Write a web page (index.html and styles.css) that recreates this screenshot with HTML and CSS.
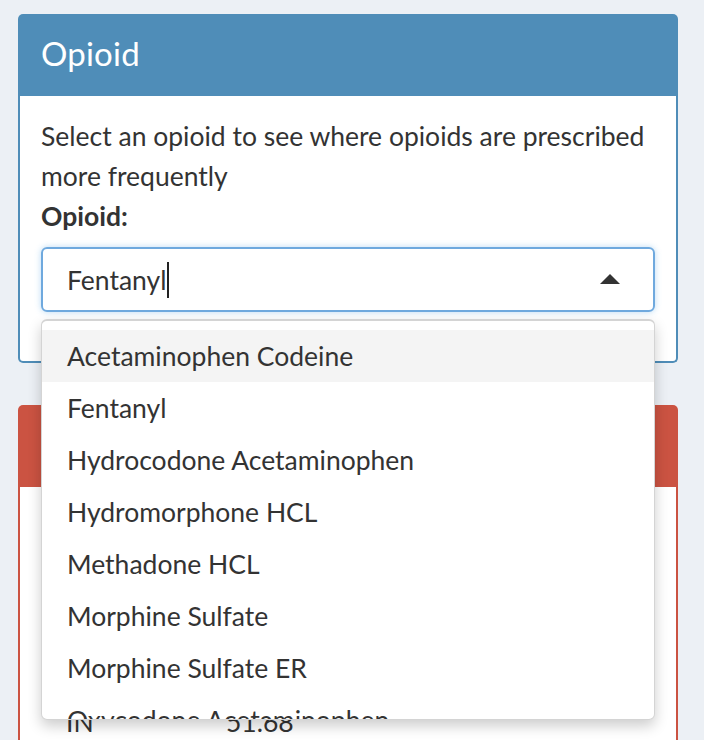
FILE: index.html
```html
<!DOCTYPE html>
<html lang="en">
<head>
<meta charset="utf-8">
<title>Opioid</title>
<link rel="stylesheet" href="styles.css">
</head>
<body>
<div class="page">
  <section class="box box-primary">
    <div class="box-header"><h3 class="box-title">Opioid</h3></div>
    <div class="box-body">
      <p class="help">Select an opioid to see where opioids are prescribed more frequently</p>
      <label class="field-label">Opioid:</label>
      <div class="select">
        <div class="select-input">
          <span class="value">Fentanyl</span><span class="cursor"></span>
          <span class="arrow"></span>
        </div>
        <div class="dropdown">
          <div class="option active">Acetaminophen Codeine</div>
          <div class="option">Fentanyl</div>
          <div class="option">Hydrocodone Acetaminophen</div>
          <div class="option">Hydromorphone HCL</div>
          <div class="option">Methadone HCL</div>
          <div class="option">Morphine Sulfate</div>
          <div class="option">Morphine Sulfate ER</div>
          <div class="option">Oxycodone Acetaminophen</div>
        </div>
      </div>
    </div>
  </section>
  <section class="box box-danger">
    <div class="box-header"></div>
    <div class="box-body">
      <div class="plot-area"></div>
      <table class="rates">
        <tr><td class="state">IN</td><td>51.68</td></tr>
      </table>
    </div>
  </section>
</div>
</body>
</html>
```
FILE: styles.css
```css
html, body {
  margin: 0;
  padding: 0;
  background: #ecf0f5;
  overflow: hidden;
}
body {
  font-family: "Lato", "Open Sans", sans-serif;
  color: #333;
  height: 740px;
}
.page {
  padding: 14px 26px 0 18px;
  display: flex;
  flex-direction: column;
  gap: 42px;
}
.box {
  border-radius: 5px;
  background: #fff;
}
.box-header {
  height: 82px;
  border-radius: 5px 5px 0 0;
  padding: 0 21px 5px 23px;
  box-sizing: border-box;
  display: flex;
  align-items: center;
}
.box-title {
  margin: 0;
  font-weight: 400;
  font-size: 33px;
  color: #fff;
  letter-spacing: 0.2px;
}
.box-body {
  border: 2px solid;
  border-top: none;
  border-radius: 0 0 5px 5px;
  padding: 20px 21px 49px 21px;
}
.box-primary .box-header { background: #4f8db8; }
.box-primary .box-body { border-color: #4f8db8; }
.box-danger .box-header { background: #cb5342; }
.box-danger .box-body { border-color: #cb5342; padding-top: 0; height: 400px; }

.help {
  margin: 0;
  font-size: 26.5px;
  line-height: 40px;
}
.field-label {
  display: block;
  font-size: 26.5px;
  line-height: 40px;
  font-weight: 700;
  margin-bottom: 11px;
}
.select {
  position: relative;
}
.select-input {
  height: 61px;
  border: 2px solid #6fa9de;
  border-radius: 6px;
  box-shadow: 0 0 6px rgba(102, 175, 233, 0.45);
  display: flex;
  align-items: center;
  padding-left: 24px;
  font-size: 26.5px;
}
.cursor {
  display: inline-block;
  width: 2px;
  height: 36px;
  background: #222;
  margin-left: 1px;
}
.arrow {
  margin-left: auto;
  margin-right: 33px;
  width: 0;
  height: 0;
  border-left: 10px solid transparent;
  border-right: 10px solid transparent;
  border-bottom: 10px solid #333;
  margin-top: -2px;
}
.dropdown {
  position: absolute;
  top: calc(100% + 7px);
  left: 0;
  right: 0;
  box-sizing: border-box;
  height: 401px;
  background: #fff;
  border: 1px solid #d4d4d4;
  border-top-width: 2px;
  border-radius: 6px;
  box-shadow: 0 6px 14px rgba(0, 0, 0, 0.2);
  padding-top: 9px;
  overflow: hidden;
  z-index: 10;
}
.option {
  height: 52px;
  line-height: 52px;
  padding-left: 25px;
  font-size: 26.5px;
  white-space: nowrap;
}
.option.active {
  background: #f4f4f4;
}
.plot-area {
  height: 215px;
}
.rates {
  border-collapse: collapse;
  font-size: 26.5px;
}
.rates td {
  padding: 0 0 0 25px;
  line-height: 40px;
}
.rates td.state {
  width: 135px;
}
```
